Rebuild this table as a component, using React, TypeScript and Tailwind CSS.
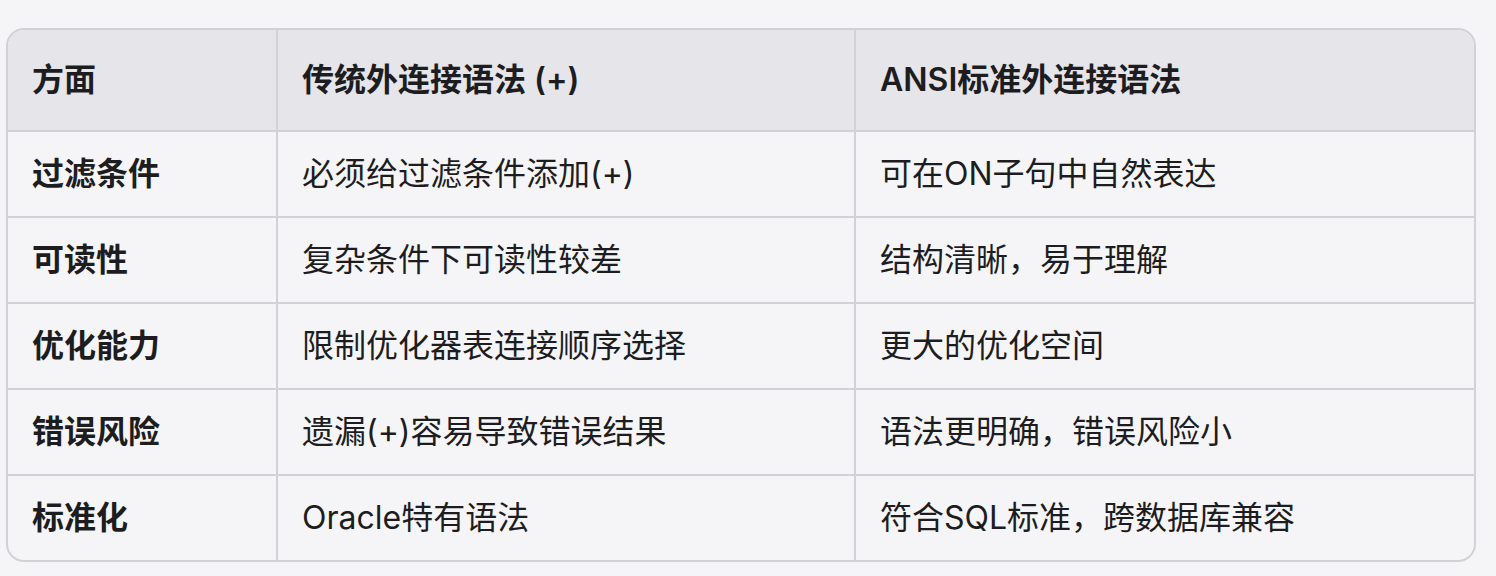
const HEADERS = ["方面", "传统外连接语法 (+)", "ANSI标准外连接语法"];

const ROWS = [
  ["过滤条件", "必须给过滤条件添加(+)", "可在ON子句中自然表达"],
  ["可读性", "复杂条件下可读性较差", "结构清晰，易于理解"],
  ["优化能力", "限制优化器表连接顺序选择", "更大的优化空间"],
  ["错误风险", "遗漏(+)容易导致错误结果", "语法更明确，错误风险小"],
  ["标准化", "Oracle特有语法", "符合SQL标准，跨数据库兼容"],
];

const COL_CLASSES = [
  "w-[270px] border-r-2 border-[#d1d1d6]",
  "w-[578px] border-r-2 border-[#d1d1d6]",
  "flex-1",
];

export default function App() {
  return (
    <div
      className="min-h-[576px] w-[1496px] bg-[#f5f5f7] pt-[28px] pl-[6px] text-[#1d1d1f]"
      style={{ fontFamily: '"Inter", "Noto Sans CJK SC", sans-serif' }}
    >
      <div className="w-[1470px] overflow-hidden rounded-[18px] border-2 border-[#d1d1d6] bg-[#f5f5f7]">
        <div className="flex h-[102px] border-b-2 border-[#d1d1d6] bg-[#e5e5ea]">
          {HEADERS.map((label, i) => (
            <div
              key={label}
              className={`flex items-center px-6 text-[32px] font-semibold ${COL_CLASSES[i]}`}
            >
              {label}
            </div>
          ))}
        </div>
        {ROWS.map((row, rowIndex) => (
          <div
            key={row[0]}
            className={`flex ${
              rowIndex < ROWS.length - 1 ? "h-[86px] border-b-2 border-[#d1d1d6]" : "h-[84px]"
            }`}
          >
            {row.map((cell, i) => (
              <div
                key={i}
                className={`flex items-center px-6 text-[32px] ${
                  i === 0 ? "font-semibold" : "font-normal"
                } ${COL_CLASSES[i]}`}
              >
                {cell}
              </div>
            ))}
          </div>
        ))}
      </div>
    </div>
  );
}
